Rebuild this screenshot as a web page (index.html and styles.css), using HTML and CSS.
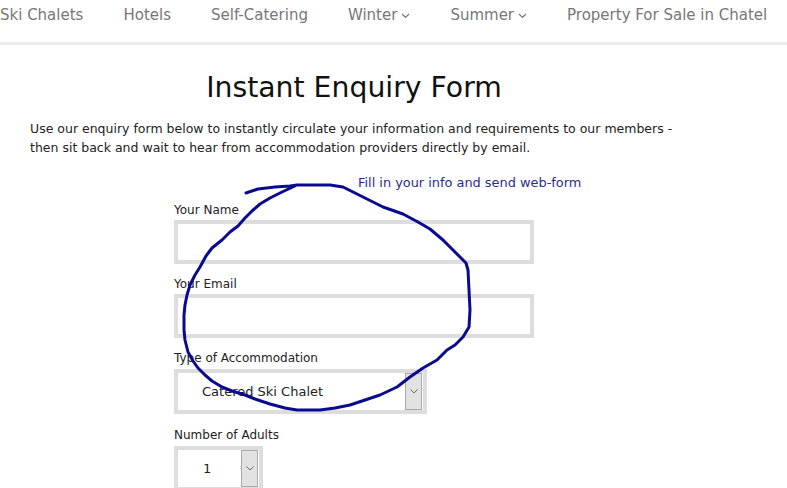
FILE: index.html
```html
<!DOCTYPE html>
<html lang="en">
<head>
<meta charset="utf-8">
<title>Instant Enquiry Form</title>
<link rel="stylesheet" href="styles.css">
</head>
<body>
<nav class="nav">
  <a class="nav-item">Ski Chalets</a>
  <a class="nav-item">Hotels</a>
  <a class="nav-item">Self-Catering</a>
  <a class="nav-item">Winter <svg class="chev" width="9" height="6" viewBox="0 0 9 6"><path d="M1 1 L4.5 4.5 L8 1" fill="none" stroke="#777" stroke-width="1.2"/></svg></a>
  <a class="nav-item">Summer <svg class="chev" width="9" height="6" viewBox="0 0 9 6"><path d="M1 1 L4.5 4.5 L8 1" fill="none" stroke="#777" stroke-width="1.2"/></svg></a>
  <a class="nav-item">Property For Sale in Chatel</a>
</nav>
<main class="content">
  <h1 class="title">Instant Enquiry Form</h1>
  <p class="intro">Use our enquiry form below to instantly circulate your information and requirements to our members - then sit back and wait to hear from accommodation providers directly by email.</p>
  <form class="form">
    <label class="label">Your Name</label>
    <div class="input"></div>
    <label class="label">Your Email</label>
    <div class="input"></div>
    <label class="label">Type of Accommodation</label>
    <div class="select select-wide">
      <span class="select-text">Catered Ski Chalet</span>
      <span class="select-btn"><svg width="8" height="5" viewBox="0 0 8 5"><path d="M0.5 0.5 L4 4 L7.5 0.5" fill="none" stroke="#666" stroke-width="1"/></svg></span>
    </div>
    <label class="label">Number of Adults</label>
    <div class="select select-small">
      <span class="select-text">1</span>
      <span class="select-btn"><svg width="8" height="5" viewBox="0 0 8 5"><path d="M0.5 0.5 L4 4 L7.5 0.5" fill="none" stroke="#666" stroke-width="1"/></svg></span>
    </div>
  </form>
</main>
<div class="note">Fill in your info and send web-form</div>
<svg class="scribble" width="787" height="488" viewBox="0 0 787 488">
  <path d="M246 193 L258 189 L275 187 L290 186 L297 185 L330 185 L343 187 L355 193 L363 197 L375 203 L383 207 L403 214 L418 222 L430 229 L443 240 L453 250 L460 257 L466 263 L468 270 L469 290 L470 310 L469 327 L463 337 L455 345 L447 350 L437 360 L423 368 L410 377 L397 387 L380 395 L365 400 L350 405 L335 408 L320 410 L297 410 L285 408 L270 404 L255 399 L245 395 L232 391 L222 387 L212 381 L205 375 L198 368 L193 361 L188 352 L185 340 L184 330 L184 315 L185 305 L187 295 L190 285 L195 275 L200 267 L206 256 L212 248 L222 240 L230 232 L238 226 L245 218 L252 211 L260 204 L270 198 L282 192 L297 185" fill="none" stroke="#0a0a90" stroke-width="3" stroke-linejoin="round" stroke-linecap="round"/>
</svg>
</body>
</html>
```
FILE: styles.css
```css
html, body {
  margin: 0;
  padding: 0;
  background: #ffffff;
}
body {
  font-family: "DejaVu Sans", Verdana, sans-serif;
  color: #222;
  width: 787px;
  height: 488px;
  overflow: hidden;
  position: relative;
}
.nav {
  display: flex;
  align-items: flex-start;
  gap: 40px;
  height: 42px;
  padding-left: 0;
  border-bottom: 3px solid #ececec;
  box-sizing: content-box;
  white-space: nowrap;
}
.nav-item {
  font-size: 15px;
  line-height: 30px;
  color: #777;
  display: flex;
  align-items: center;
  gap: 4px;
}
.chev {
  margin-top: 1px;
}
.content {
  width: 648px;
  margin-left: 30px;
}
.title {
  margin: 26px 0 0;
  font-size: 28.3px;
  line-height: 34px;
  font-weight: normal;
  color: #111;
  text-align: center;
}
.intro {
  margin: 14px 0 0;
  font-size: 12.5px;
  line-height: 19px;
  color: #222;
}
.form {
  width: 360px;
  margin: 45px auto 0;
  display: flex;
  flex-direction: column;
  align-items: flex-start;
}
.label {
  display: block;
  font-size: 12px;
  line-height: 16px;
  color: #222;
  margin-bottom: 2px;
}
.input {
  width: 360px;
  height: 44px;
  box-sizing: border-box;
  border: 4px solid #dddddd;
  background: #fff;
  margin-bottom: 12px;
}
.select {
  height: 45px;
  box-sizing: border-box;
  border: 4px solid #dddddd;
  background: #fff;
  display: flex;
  align-items: center;
  justify-content: space-between;
  padding: 0 1px 0 0;
  margin-bottom: 13px;
  margin-top: 1px;
}
.select-wide {
  width: 253px;
}
.select-small {
  width: 89px;
}
.select-text {
  font-size: 13px;
  padding-left: 24px;
  color: #222;
}
.select-small .select-text {
  padding-left: 25px;
}
.select-btn {
  width: 15px;
  height: 35px;
  border: 1px solid #aaaaaa;
  background: #e2e2e2;
  display: flex;
  align-items: center;
  justify-content: center;
}
.note {
  position: absolute;
  left: 358px;
  top: 175px;
  font-size: 12.9px;
  line-height: 16px;
  color: #2b2b8f;
}
.scribble {
  position: absolute;
  left: 0;
  top: 0;
  pointer-events: none;
}
```
